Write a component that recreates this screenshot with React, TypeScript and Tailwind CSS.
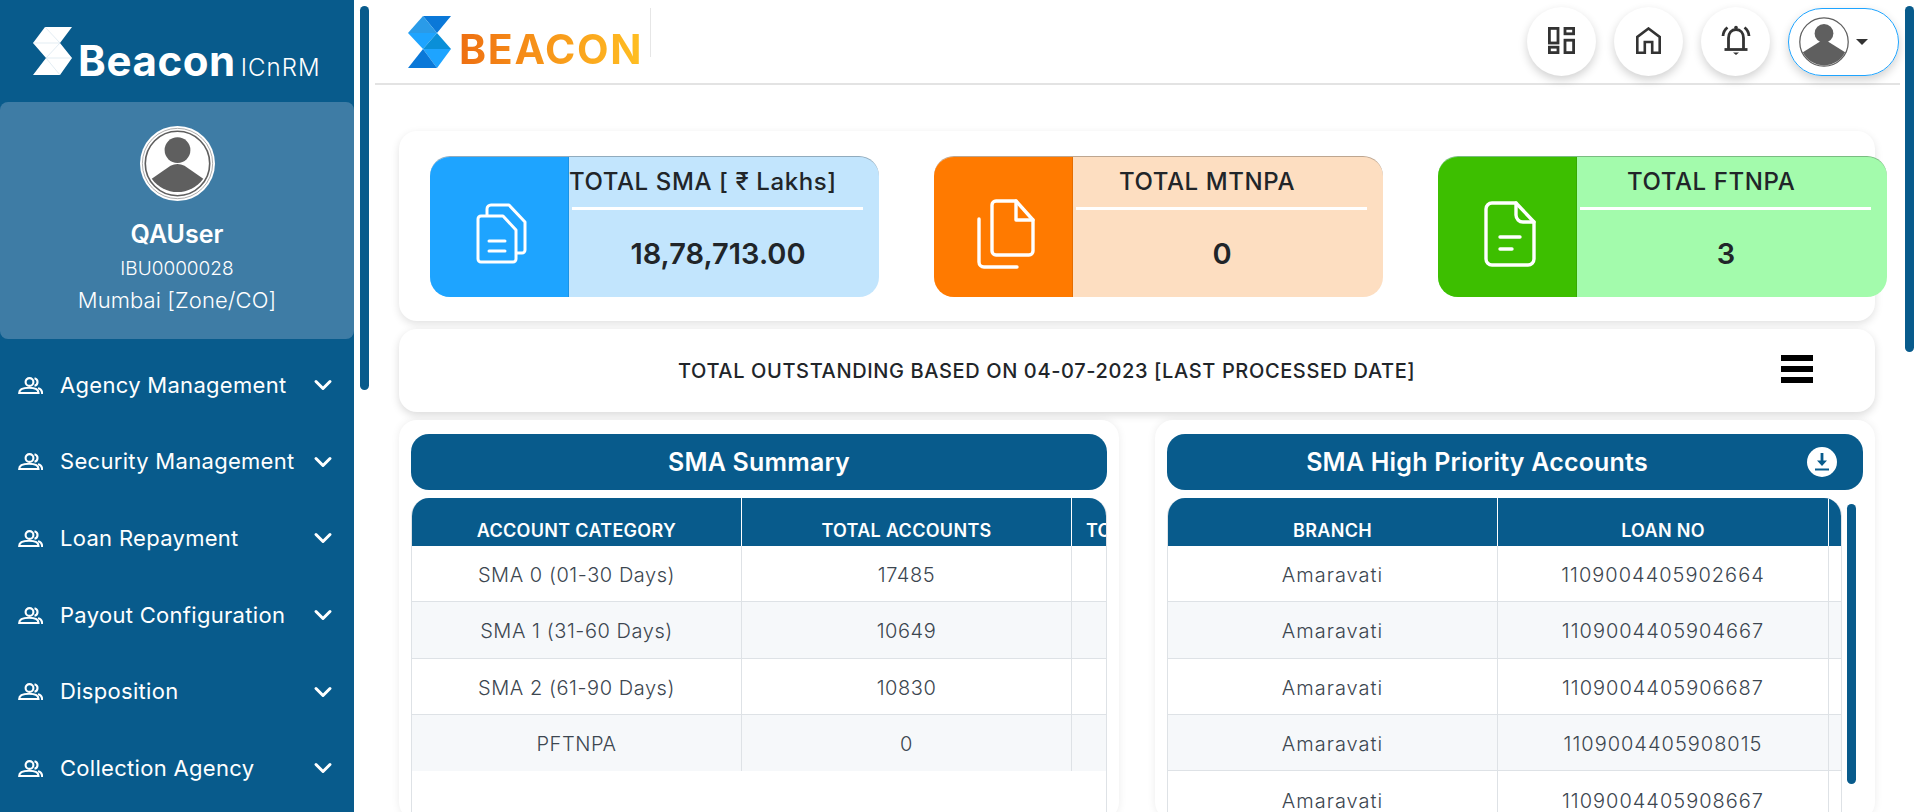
import { ChevronDown } from "lucide-react";

const menu = ["Agency Management", "Security Management", "Loan Repayment", "Payout Configuration", "Disposition", "Collection Agency"];

const Avatar = ({ className, ringed }: { className: string; ringed?: boolean }) => (
  <svg viewBox="0 0 64 64" className={className}>
    {ringed ? (
      <>
        <circle cx="32" cy="32" r="32" fill="#fff" />
        <circle cx="32" cy="32" r="30" fill="none" stroke="#8a8a8a" strokeWidth="0.6" />
        <circle cx="32" cy="32" r="27.5" fill="#fff" stroke="#5f5f5f" strokeWidth="1.4" />
        <circle cx="32" cy="20.5" r="11" fill="#5f5f5f" />
        <path d="M10 45 L26 34 Q32 31 38 34 L54 45 A27 27 0 0 1 10 45 Z" fill="#5f5f5f" />
      </>
    ) : (
      <>
        <circle cx="32" cy="32" r="31" fill="#fff" stroke="#5f5f5f" strokeWidth="1.6" />
        <circle cx="32" cy="21" r="12" fill="#5f5f5f" />
        <path d="M5 45 L26 32 Q32 29 38 32 L59 45 A30 30 0 0 1 5 45 Z" fill="#5f5f5f" />
      </>
    )}
  </svg>
);

const WhiteMark = () => (
  <svg viewBox="0 0 40 48" className="h-[48px] w-[40px] shrink-0">
    <polygon points="12,0 39,0 27,16 39,31 27,48 0,48 13,31 0,16" fill="#fff" />
    <path d="M0 16H27M12 0L27 16M27 16L13 31M13 31L27 48M13 31H39" stroke="#c4d8e6" strokeWidth="0.5" fill="none" />
  </svg>
);

const BlueMark = () => (
  <svg viewBox="0 0 43 52" className="h-[52px] w-[43px] shrink-0">
    <polygon points="15,0 43,0 29,17" fill="#0a78d8" />
    <polygon points="15,0 29,17 0,17" fill="#2a9be8" />
    <polygon points="0,17 29,17 15,33" fill="#1ea4ff" />
    <polygon points="29,17 43,33 15,33" fill="#0a8fd8" />
    <polygon points="15,33 43,33 29,52" fill="#1ea4ff" />
    <polygon points="15,33 29,52 0,52" fill="#0a78d8" />
  </svg>
);

const UserIcon = () => (
  <svg viewBox="0 0 25 17" className="h-[17px] w-[25px] shrink-0" fill="none" stroke="#fff" strokeWidth="2.1">
    <circle cx="11.5" cy="5" r="3.9" />
    <path d="M16.5 1.2A3.9 3.9 0 0 1 16.5 8.8" />
    <path d="M1.2 16C1.2 12 6 10.8 11 10.8S20.5 12 20.5 16Z" />
    <path d="M20 11.2C23 11.8 24.2 13.5 24.2 17" />
  </svg>
);

const GridIcon = () => (
  <svg viewBox="0 0 27 27" className="h-[27px] w-[27px]" fill="none" stroke="#333" strokeWidth="2.8">
    <rect x="1.4" y="1.4" width="8.6" height="14.6" />
    <rect x="1.4" y="20.2" width="8.6" height="5.4" />
    <rect x="17" y="1.4" width="8.6" height="5.4" />
    <rect x="17" y="13.2" width="8.6" height="12.4" />
  </svg>
);

const HomeIcon = () => (
  <svg viewBox="0 0 25 27" className="h-[27px] w-[25px]" fill="none" stroke="#333" strokeWidth="2.6">
    <path d="M12.5 1.5L23.7 10V25.7H16.2V15H8.8V25.7H1.3V10Z" />
  </svg>
);

const BellIcon = () => (
  <svg viewBox="0 0 30 30" className="h-[30px] w-[30px]" fill="none" stroke="#333" strokeWidth="2.8">
    <path d="M7.5 24V13C7.5 8 10.5 4.5 15 4.5S22.5 8 22.5 13V24" />
    <path d="M3.5 24.5H26.5" />
    <path d="M12 27.5H18L15 30Z" fill="#333" stroke="none" />
    <circle cx="15" cy="2.5" r="1.8" fill="#333" stroke="none" />
    <path d="M2 11C2.3 7.5 3.8 4.5 6.5 2.5M28 11C27.7 7.5 26.2 4.5 23.5 2.5" />
  </svg>
);

const FilesIcon = () => (
  <svg viewBox="0 0 51 61" className="h-[61px] w-[51px]" fill="none" stroke="#fff" strokeWidth="3" strokeLinecap="round" strokeLinejoin="round">
    <path d="M5 13H27L40 27V56a3 3 0 0 1-3 3H5a3 3 0 0 1-3-3V16a3 3 0 0 1 3-3Z" />
    <path d="M11 12V6a4 4 0 0 1 4-4H33L49 19V47a3 3 0 0 1-3 3H41" />
    <path d="M13 38H29M13 48H29" />
  </svg>
);

const CopyFileIcon = () => (
  <svg viewBox="0 0 58 70" className="h-[70px] w-[58px]" fill="none" stroke="#fff" strokeWidth="3.4" strokeLinecap="round" strokeLinejoin="round">
    <path d="M19 2H39L56 21V52a4 4 0 0 1-4 4H19a4 4 0 0 1-4-4V6a4 4 0 0 1 4-4Z" />
    <path d="M39 2V21H56" />
    <path d="M2 20V63a5 5 0 0 0 5 5H40" />
  </svg>
);

const FileLinesIcon = () => (
  <svg viewBox="0 0 52 66" className="h-[66px] w-[52px]" fill="none" stroke="#fff" strokeWidth="3.4" strokeLinecap="round" strokeLinejoin="round">
    <path d="M8 2H32L50 21V58a6 6 0 0 1-6 6H8a6 6 0 0 1-6-6V8a6 6 0 0 1 6-6Z" />
    <path d="M32 2V14a7 7 0 0 0 7 7H50" />
    <path d="M16 36H36M16 48H28" />
  </svg>
);

const DownloadIcon = () => (
  <svg viewBox="0 0 30 30" className="h-[30px] w-[30px]">
    <circle cx="15" cy="15" r="15" fill="#fff" />
    <path d="M13.6 6H16.4V13.5H20L15 19L10 13.5H13.6Z" fill="#085b8c" />
    <path d="M8 22.5H22" stroke="#085b8c" strokeWidth="2" />
  </svg>
);

const StatCard = ({ title, value, dark, light, icon, titleClass }: any) => (
  <div className={`flex h-[141px] w-[449px] shrink-0 overflow-hidden rounded-[20px] border-t border-black/25 ${light}`}>
    <div className={`flex w-[139px] items-center justify-center border-r border-black/10 pl-[5px] pt-[13px] ${dark}`}>{icon}</div>
    <div className="flex flex-1 flex-col">
      <div className={`h-[50px] pt-[10px] text-[24px] leading-[30px] font-medium tracking-[0.6px] whitespace-nowrap text-[#212529] ${titleClass}`}>{title}</div>
      <div className="ml-[3px] mr-4 h-[3px] bg-white" />
      <div className="pr-[12px] pt-[24px] text-center text-[29px] leading-[40px] font-semibold text-[#212529]">{value}</div>
    </div>
  </div>
);

const Table = ({ heads, rows, cols, tableClass, cellClass }: any) => (
  <div className={`h-[340px] overflow-hidden rounded-t-[18px] border-x border-[#dee2e6] ${tableClass}`}>
    <div className="flex h-[48px] bg-[#085b8c] text-white">
      {heads.map((h: string, i: number) => (
        <div key={i} className={`${cols[i]} shrink-0 overflow-hidden whitespace-nowrap border-r border-white pt-[21px] text-[18px] leading-[24px] font-semibold tracking-[0.3px] ${i === 2 ? "pl-[14px]" : "text-center"}`}>{h}</div>
      ))}
    </div>
    {rows.map((r: string[], i: number) => (
      <div key={i} className={`flex h-[56.25px] ${i < rows.length - 1 ? "border-b border-[#dee2e6]" : ""} ${i % 2 ? "bg-[#f6f8fa]" : "bg-white"}`}>
        {r.map((c, j) => (
          <div key={j} className={`${cols[j]} flex shrink-0 items-center justify-center border-r border-[#dee2e6] pt-[3px] text-[20px] font-light text-[#3c4650] ${cellClass}`}>{c}</div>
        ))}
      </div>
    ))}
  </div>
);

export default function App() {
  return (
    <div className="flex h-[812px] overflow-hidden bg-white font-['Inter',sans-serif]">
      <aside className="h-full w-[354px] shrink-0 bg-[#085b8c] text-white">
        <div className="flex h-[102px] items-start pl-[33px] pt-[27px]">
          <WhiteMark />
          <span className="ml-[5px] mt-[14px] text-[42px] leading-[40px] font-bold tracking-[0.6px]">Beacon</span>
          <span className="ml-[5px] mt-[28px] text-[24px] leading-[26px] font-light tracking-[1px]">ICnRM</span>
        </div>
        <div className="flex h-[237px] flex-col items-center rounded-lg bg-[#3e7ca5] pt-[24px]">
          <Avatar ringed className="h-[75px] w-[75px]" />
          <div className="mt-[18px] text-[25px] leading-[30px] font-semibold">QAUser</div>
          <div className="mt-[7px] text-[19px] leading-[26px] font-light">IBU0000028</div>
          <div className="mt-[2px] text-[22px] leading-[32px] font-light tracking-[0.1px]">Mumbai [Zone/CO]</div>
        </div>
        <nav className="pt-[8px]">
          {menu.map((m) => (
            <div key={m} className="flex h-[76.6px] items-center pl-[18px] pr-[17px]">
              <UserIcon />
              <span className="ml-[17px] flex-1 text-[22px] font-normal tracking-[0.3px] whitespace-nowrap">{m}</span>
              <ChevronDown size={28} strokeWidth={2.6} />
            </div>
          ))}
        </nav>
      </aside>

      <div className="absolute left-[360px] top-[6px] h-[384px] w-[9px] rounded-full bg-[#085b8c]" />
      <div className="absolute left-[1905px] top-[6px] h-[346px] w-[9px] rounded-full bg-[#085b8c]" />

      <main className="ml-[21px] w-[1525px] shrink-0">
        <header className="flex h-[85px] items-center justify-between border-b-2 border-[#e3e3e3] pr-[1px]">
          <div className="flex h-full items-center pl-[33px]">
            <BlueMark />
            <span className="ml-[8px] mt-[14px] w-[181px] bg-gradient-to-r from-[#ee6f12] to-[#ffbe22] bg-clip-text text-[41px] leading-[40px] font-bold tracking-[1.7px] whitespace-nowrap text-transparent">BEACON</span>
            <div className="ml-[10px] mb-[19px] h-[49px] w-px bg-[#e6e6e6]" />
          </div>
          <div className="flex items-center gap-[18px]">
            {[<GridIcon key="g" />, <HomeIcon key="h" />, <BellIcon key="b" />].map((icon, i) => (
              <div key={i} className="flex h-[69px] w-[69px] items-center justify-center rounded-full bg-white pb-[3px] shadow-[0_4px_10px_rgba(0,0,0,0.18)]">
                {icon}
              </div>
            ))}
            <div className="flex h-[68px] w-[111px] items-center rounded-full border border-[#1ea4ff] pl-[10px] shadow-[0_4px_10px_rgba(0,0,0,0.18)]">
              <Avatar className="h-[50px] w-[50px]" />
              <div className="ml-[7px] border-x-[6px] border-t-[6px] border-x-transparent border-t-[#333]" />
            </div>
          </div>
        </header>

        <div className="pl-[24px] pr-[25px] pt-[46px]">
          <div className="flex h-[190px] w-[1476px] items-start gap-[55px] rounded-[18px] bg-white pl-[31px] pt-[25px] shadow-[0_3px_8px_rgba(0,0,0,0.12)]">
            <StatCard title="TOTAL SMA [ ₹ Lakhs]" value="18,78,713.00" dark="bg-[#1ea4ff]" light="bg-[#c2e5fd]" icon={<FilesIcon />} />
            <StatCard title="TOTAL MTNPA" value="0" dark="bg-[#ff7a00]" light="bg-[#fddec1]" titleClass="pl-[46px]" icon={<CopyFileIcon />} />
            <StatCard title="TOTAL FTNPA" value="3" dark="bg-[#3dbf00]" light="bg-[#a3fbac]" titleClass="pl-[50px]" icon={<FileLinesIcon />} />
          </div>

          <div className="mt-[8px] flex h-[83px] w-[1476px] items-center rounded-[18px] bg-white shadow-[0_3px_8px_rgba(0,0,0,0.15)]">
            <span className="ml-[279px] text-[20px] font-medium tracking-[0.62px] whitespace-nowrap text-[#212529]">TOTAL OUTSTANDING BASED ON 04-07-2023 [LAST PROCESSED DATE]</span>
            <div className="mb-[4px] ml-auto mr-[62px] flex w-[32px] flex-col gap-[5px]">
              <div className="h-[6px] bg-black" />
              <div className="h-[6px] bg-black" />
              <div className="h-[6px] bg-black" />
            </div>
          </div>

          <div className="mt-[8px] flex w-[1476px] justify-between">
            <section className="h-[400px] w-[720px] rounded-[18px] bg-white px-[12px] pt-[14px] shadow-[0_0_8px_rgba(0,0,0,0.08)]">
              <div className="flex h-[56px] items-center justify-center rounded-[18px] bg-[#085b8c] pt-[2px] text-[25px] font-semibold tracking-[0.2px] text-white">SMA Summary</div>
              <Table
                tableClass="mt-[8px]"
                cellClass="tracking-[0.55px]"
                heads={["ACCOUNT CATEGORY", "TOTAL ACCOUNTS", "TOTAL OUTSTANDING"]}
                cols={["w-[330px]", "w-[330px]", "w-[36px]"]}
                rows={[["SMA 0 (01-30 Days)", "17485", ""], ["SMA 1 (31-60 Days)", "10649", ""], ["SMA 2 (61-90 Days)", "10830", ""], ["PFTNPA", "0", ""]]}
              />
            </section>
            <section className="relative h-[400px] w-[720px] rounded-[18px] bg-white px-[12px] pt-[14px] shadow-[0_0_8px_rgba(0,0,0,0.08)]">
              <div className="relative flex h-[56px] items-center justify-center rounded-[18px] bg-[#085b8c] pr-[76px] pt-[2px] text-[25px] font-semibold tracking-[0.2px] text-white">
                SMA High Priority Accounts
                <div className="absolute right-[26px] top-[13px]">
                  <DownloadIcon />
                </div>
              </div>
              <Table
                tableClass="mt-[8px] mr-[21px]"
                cellClass="tracking-[1px]"
                heads={["BRANCH", "LOAN NO", ""]}
                cols={["w-[330px]", "w-[331px]", "w-[13px]"]}
                rows={[["Amaravati", "1109004405902664", ""], ["Amaravati", "1109004405904667", ""], ["Amaravati", "1109004405906687", ""], ["Amaravati", "1109004405908015", ""], ["Amaravati", "1109004405908667", ""]]}
              />
              <div className="absolute left-[692px] top-[84px] h-[280px] w-[9px] rounded-full bg-[#085b8c]" />
            </section>
          </div>
        </div>
      </main>
    </div>
  );
}
